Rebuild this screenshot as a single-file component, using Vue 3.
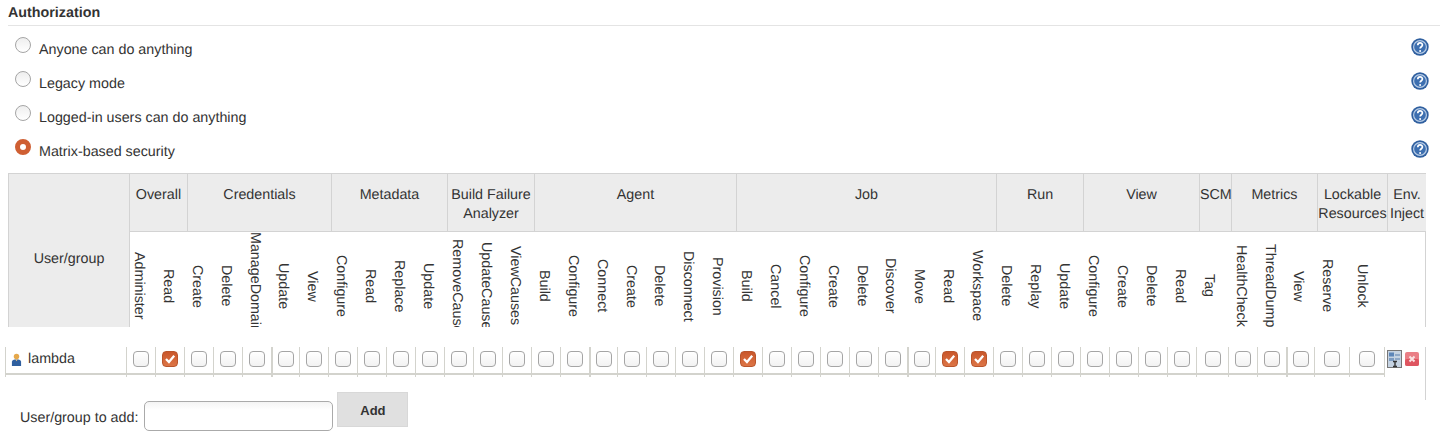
<template>
  <div class="page">
    <div class="section-title">Authorization</div>

    <div v-for="mode in modes" :key="mode.label" class="mode">
      <span class="radio" :class="{ on: mode.on }"></span>
      <span class="mode-label">{{ mode.label }}</span>
      <svg class="help" viewBox="0 0 18 18">
        <circle cx="9" cy="9" r="8.7" fill="#2f5f9f" />
        <circle cx="9" cy="9" r="7" fill="#b9cde6" />
        <circle cx="9" cy="9" r="5.8" fill="#3d6fb0" />
        <path d="M6.8 7.2c0-3 4.6-3 4.6-.2 0 1.7-2.3 1.8-2.3 3.6" fill="none" stroke="#fff" stroke-width="1.7" />
        <circle cx="9.1" cy="13" r="1" fill="#fff" />
      </svg>
    </div>

    <!-- Permission matrix header -->
    <div class="matrix-head">
      <div class="user-head">User/group</div>
      <div v-for="group in groups" :key="group.name" class="group" :style="{ width: group.width + 'px' }">
        <div class="group-name">
          <span v-for="line in group.name.split('|')" :key="line">{{ line }}</span>
        </div>
        <div class="perms">
          <div v-for="(perm, i) in group.perms" :key="i" class="perm">
            <span class="perm-label">{{ perm }}</span>
          </div>
        </div>
      </div>
    </div>

    <div class="lower">
      <div class="user-row">
        <div class="cell name-cell" :style="{ width: cellWidths[0] + 'px' }">
          <div class="cell-body">
            <svg class="user-icon" viewBox="0 0 12 14">
              <circle cx="6" cy="3.6" r="3" fill="#e5a84b" />
              <path d="M1 14V9.5C1 7.5 3 6.6 6 6.6s5 .9 5 2.9V14z" fill="#2f5f9f" />
              <path d="M4.6 6.8 6 9l1.4-2.2z" fill="#e9c37e" />
            </svg>
            <span>lambda</span>
          </div>
        </div>
        <div
          v-for="(w, i) in cellWidths.slice(1)"
          :key="i"
          class="cell"
          :class="{ thick: thickCells.includes(i) }"
          :style="{ width: w + 'px' }"
        >
          <div class="cell-body">
            <span class="check" :class="{ on: checked.includes(i) }">
              <svg v-if="checked.includes(i)" viewBox="0 0 16 16">
                <path d="M3.4 8 6.8 11.4 12.8 4.4" fill="none" stroke="#fff" stroke-width="2.6" />
              </svg>
            </span>
          </div>
        </div>
        <div class="row-end"></div>
        <div class="row-actions">
          <svg class="config-icon" viewBox="0 0 15 18">
            <rect x=".5" y=".5" width="14" height="17" fill="#c5d3e2" stroke="#777" />
            <rect x="2" y="2.5" width="5" height="4" fill="#5d86b8" />
            <rect x="8" y="4" width="5" height="2" fill="#8fa9c8" />
            <rect x="2" y="8" width="5" height="3" fill="#7d9cc2" />
            <rect x="8" y="8" width="5" height="2" fill="#8fa9c8" />
            <path d="M6 11.5h4M8 11.5v5M6 16.5h4" stroke="#333" stroke-width="1.4" fill="none" />
          </svg>
          <svg class="delete-icon" viewBox="0 0 14 14">
            <rect width="14" height="14" rx="2" fill="#ea7f86" />
            <rect y="7" width="14" height="7" rx="2" fill="#de5560" />
            <path d="M4.5 4.5l5 5M9.5 4.5l-5 5" stroke="#fbe3e3" stroke-width="2" />
          </svg>
        </div>
      </div>

      <div class="add-row">
        <label class="add-label">User/group to add:</label>
        <input class="add-input" type="text" />
        <button class="add-btn">Add</button>
      </div>
    </div>
  </div>
</template>

<script setup>
const modes = [
  { label: 'Anyone can do anything' },
  { label: 'Legacy mode' },
  { label: 'Logged-in users can do anything' },
  { label: 'Matrix-based security', on: true }
];

const groups = [
  { name: 'Overall', width: 58, perms: ['Administer', 'Read'] },
  { name: 'Credentials', width: 144, perms: ['Create', 'Delete', 'ManageDomains', 'Update', 'View'] },
  { name: 'Metadata', width: 116, perms: ['Configure', 'Read', 'Replace', 'Update'] },
  { name: 'Build Failure|Analyzer', width: 87, perms: ['RemoveCause', 'UpdateCause', 'ViewCauses'] },
  { name: 'Agent', width: 202, perms: ['Build', 'Configure', 'Connect', 'Create', 'Delete', 'Disconnect', 'Provision'] },
  { name: 'Job', width: 260, perms: ['Build', 'Cancel', 'Configure', 'Create', 'Delete', 'Discover', 'Move', 'Read', 'Workspace'] },
  { name: 'Run', width: 87, perms: ['Delete', 'Replay', 'Update'] },
  { name: 'View', width: 116, perms: ['Configure', 'Create', 'Delete', 'Read'] },
  { name: 'SCM', width: 32, perms: ['Tag'] },
  { name: 'Metrics', width: 86, perms: ['HealthCheck', 'ThreadDump', 'View'] },
  { name: 'Lockable|Resources', width: 70, perms: ['Reserve', 'Unlock'] },
  { name: 'Env.|Inject', width: 38, perms: [''] }
];

// x of every vertical rule in the user row
const edges = [
  5, 126, 155, 184, 213, 242, 271, 299, 328, 357, 386, 415, 444, 473, 502, 531, 560, 589, 617, 646, 675, 704, 733,
  762, 791, 820, 849, 878, 907, 935, 964, 993, 1022, 1051, 1080, 1109, 1138, 1167, 1196, 1228, 1257, 1286, 1314,
  1349, 1384
];
const cellWidths = edges.slice(1).map((x, i) => x - edges[i]);

const checked = [1, 21, 28, 29];
const thickCells = [5, 16, 27, 40];
</script>

<style>
body {
  background: #fff;
}
</style>

<style scoped>
.page {
  width: 1440px;
  height: 444px;
  overflow: hidden;
  font-family: "Liberation Sans", Arial, sans-serif;
  font-size: 14.3px;
  text-rendering: geometricPrecision;
  color: #333;
}

.section-title {
  height: 25px;
  margin: 0 0 6px 8px;
  border-bottom: 1px solid #e4e4e4;
  font-weight: bold;
  line-height: 26px;
}

.mode {
  display: flex;
  height: 34px;
  padding-left: 15px;
}

.radio {
  flex: none;
  box-sizing: border-box;
  width: 16px;
  height: 16px;
  margin-top: 5px;
  border: 1px solid #a5a5a5;
  border-radius: 50%;
  background: linear-gradient(#eee, #fff);
}

.radio.on {
  border: 5px solid #cf5f33;
  background: #fff;
}

.mode-label {
  margin: 9px 0 0 8px;
  line-height: 18px;
}

.help {
  width: 18px;
  height: 18px;
  margin: 6px 0 0 auto;
  margin-right: 11px;
}

.matrix-head {
  display: flex;
  box-sizing: border-box;
  width: 1418px;
  height: 154px;
  margin: 5px 0 0 8px;
  border-top: 1px solid #d3d3d3;
  border-right: 1px solid #d3d3d3;
}

.user-head {
  flex: none;
  box-sizing: border-box;
  width: 122px;
  border-left: 1px solid #d3d3d3;
  border-right: 1px solid #d3d3d3;
  background: #ececec;
  padding-top: 76px;
  text-align: center;
  line-height: 19px;
}

.group {
  display: flex;
  flex: none;
  flex-direction: column;
}

.group-name {
  display: flex;
  flex-direction: column;
  box-sizing: border-box;
  height: 58px;
  padding-top: 12px;
  border-right: 1px solid #d3d3d3;
  border-bottom: 1px solid #d3d3d3;
  background: #ececec;
  text-align: center;
  line-height: 19px;
  white-space: nowrap;
}

.group:last-child .group-name {
  border-right: 0;
}

.perms {
  display: flex;
  flex: 1;
  min-height: 0;
}

.perm {
  flex: 1;
  min-width: 0;
  height: 95px;
  overflow: hidden;
}

.perm-label {
  display: flex;
  align-items: center;
  justify-content: center;
  height: 108px;
  padding-left: 1px;
  writing-mode: vertical-rl;
  line-height: 16px;
  white-space: nowrap;
}

.lower {
  position: relative;
  margin: 20px 0 0 5px;
}

/* right rule of the fieldset keeps running beside the row */
.lower::after {
  content: "";
  position: absolute;
  top: 0;
  left: 1420px;
  width: 1px;
  height: 53px;
  background: #d3d3d3;
}

.user-row {
  display: flex;
  height: 30px;
}

.cell {
  flex: none;
  box-sizing: border-box;
  height: 30px;
  border-left: 1px solid #d3d3cd;
}

.cell.thick {
  border-left-width: 2px;
}

.cell-body {
  display: flex;
  align-items: center;
  justify-content: center;
  height: 24px;
  padding-bottom: 2px;
  border-bottom: 2px solid #d3d3cd;
}

.name-cell .cell-body {
  justify-content: flex-start;
  padding-left: 5px;
}

.user-icon {
  width: 11px;
  height: 13px;
  margin-right: 6px;
}

.check {
  box-sizing: border-box;
  width: 16px;
  height: 16px;
  border: 1px solid #a5a5a5;
  border-radius: 4px;
  background: linear-gradient(#fff, #f2f2f2);
}

.check.on {
  border-color: #b9552c;
  background: linear-gradient(#c9572b, #dd7546);
}

.check svg {
  display: block;
  width: 14px;
  height: 14px;
}

.row-end {
  flex: none;
  width: 1px;
  height: 30px;
  background: #d3d3cd;
}

.row-actions {
  display: flex;
  align-items: center;
  gap: 3px;
  height: 24px;
  padding-left: 2px;
}

.config-icon {
  width: 15px;
  height: 18px;
}

.delete-icon {
  width: 14px;
  height: 14px;
}

.add-row {
  display: flex;
  margin: 15px 0 0 15px;
}

.add-label {
  margin: 17px 6px 0 0;
  line-height: 18px;
}

.add-input {
  box-sizing: border-box;
  width: 189px;
  height: 30px;
  margin-top: 9px;
  border: 1px solid #aaa;
  border-radius: 5px;
  background: linear-gradient(#f4f4f4, #fff 30%);
}

.add-btn {
  width: 71px;
  height: 35px;
  margin-left: 4px;
  padding-top: 3px;
  border: 1px solid #d8d8d8;
  background: #e0e0e0;
  color: #333;
  font: bold 13px "Liberation Sans", Arial, sans-serif;
}
</style>
